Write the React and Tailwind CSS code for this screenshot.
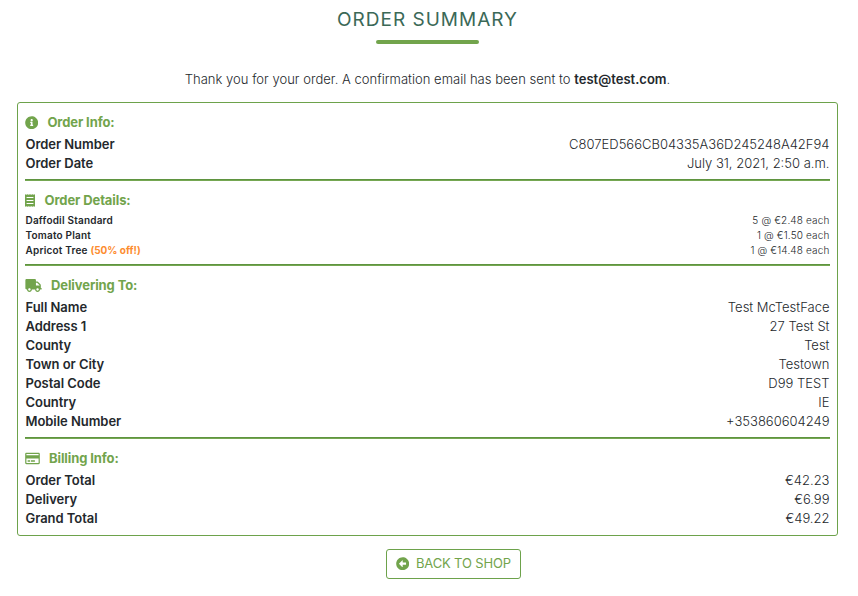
import { FaInfoCircle, FaTruck, FaRegCreditCard, FaArrowAltCircleLeft } from "react-icons/fa";

function ReceiptIcon() {
  return (
    <svg width="10" height="13" viewBox="0 0 10 13" className="shrink-0" aria-hidden="true">
      <path
        fill="currentColor"
        fillRule="evenodd"
        d="M0 .2 1.25.8 2.5.2l1.25.6L5 .2l1.25.6L7.5.2l1.25.6L10 .2v12.6l-1.25-.6-1.25.6-1.25-.6-1.25.6-1.25-.6-1.25.6-1.25-.6L0 12.8ZM1.6 3v1h6.8V3ZM1.6 6v1h6.8V6ZM1.6 9v1h6.8V9Z"
      />
    </svg>
  );
}

function Heading({ icon, gap, children }) {
  return (
    <h2 className={"mb-[3px] flex h-[19px] items-center text-[13px] leading-[19px] font-bold tracking-[-0.1px] text-[#72a44c] " + gap}>
      {icon}
      <span>{children}</span>
    </h2>
  );
}

function Row({ label, value }) {
  return (
    <div className="flex justify-between text-[13px] leading-[19px]">
      <span className="pl-[0.5px] font-semibold tracking-[-0.05px]">{label}</span>
      <span className="pr-[0.5px] font-light">{value}</span>
    </div>
  );
}

function Item({ name, offer, value }) {
  return (
    <div className="flex justify-between text-[10px] leading-[15px]">
      <span className="pl-[0.5px] font-semibold tracking-[0.2px]">
        {name} {offer && <span className="font-bold tracking-normal text-[#fd8d30]">{offer}</span>}
      </span>
      <span className="pr-[0.5px] font-light tracking-[0.15px]">{value}</span>
    </div>
  );
}

function Divider() {
  return <hr className="mt-[6px] mb-[10px] h-[2px] border-t border-b border-t-[#5f9440] border-b-[#75a752]" />;
}

const delivery = [
  ["Full Name", "Test McTestFace"],
  ["Address 1", "27 Test St"],
  ["County", "Test"],
  ["Town or City", "Testown"],
  ["Postal Code", "D99 TEST"],
  ["Country", "IE"],
  ["Mobile Number", "+353860604249"],
];

const billing = [
  ["Order Total", "€42.23"],
  ["Delivery", "€6.99"],
  ["Grand Total", "€49.22"],
];

export default function App() {
  return (
    <main className="flex h-[596px] w-[858px] flex-col bg-white font-['Inter',sans-serif] text-[#24282c]">
      <header className="flex flex-col items-center pt-[8px] pr-[3px]">
        <h1 className="text-[19px] leading-6 tracking-[1px] text-[#3b6957]">ORDER SUMMARY</h1>
        <div className="mt-[8px] h-1 w-[103px] rounded-full bg-[#72a44c]" />
      </header>
      <p className="mt-[26px] pr-[3px] text-center text-[13px] leading-[19px] font-light tracking-[0.02px]">
        Thank you for your order. A confirmation email has been sent to <strong className="font-semibold">test@test.com</strong>.
      </p>
      <div className="mt-[13px] ml-[17px] h-[434px] w-[821px] rounded-[3px] border border-[#6da24b] px-[7px] pt-[10px]">
        <section>
          <Heading gap="gap-[9px]" icon={<FaInfoCircle size={13.4} />}>Order Info:</Heading>
          <Row label="Order Number" value="C807ED566CB04335A36D245248A42F94" />
          <Row label="Order Date" value="July 31, 2021, 2:50 a.m." />
        </section>
        <Divider />
        <section>
          <Heading gap="gap-[9.5px]" icon={<ReceiptIcon />}>Order Details:</Heading>
          <Item name="Daffodil Standard" value="5 @ €2.48 each" />
          <Item name="Tomato Plant" value="1 @ €1.50 each" />
          <Item name="Apricot Tree" offer="(50% off!)" value="1 @ €14.48 each" />
        </section>
        <Divider />
        <section>
          <Heading gap="gap-[9px]" icon={<FaTruck size={13} className="w-[17px]" />}>Delivering To:</Heading>
          {delivery.map(([label, value]) => <Row key={label} label={label} value={value} />)}
        </section>
        <Divider />
        <section>
          <Heading gap="gap-[9px]" icon={<FaRegCreditCard size={13} className="w-[15px]" />}>Billing Info:</Heading>
          {billing.map(([label, value]) => <Row key={label} label={label} value={value} />)}
        </section>
      </div>
      <button className="mt-[13px] ml-[386px] flex h-[30px] w-[135px] items-center justify-center gap-[6.5px] rounded-[3px] border border-[#6da24b] pb-px text-[13px] tracking-[-0.15px] text-[#72a44c]">
        <FaArrowAltCircleLeft size={13.4} />
        <span>BACK TO SHOP</span>
      </button>
    </main>
  );
}
